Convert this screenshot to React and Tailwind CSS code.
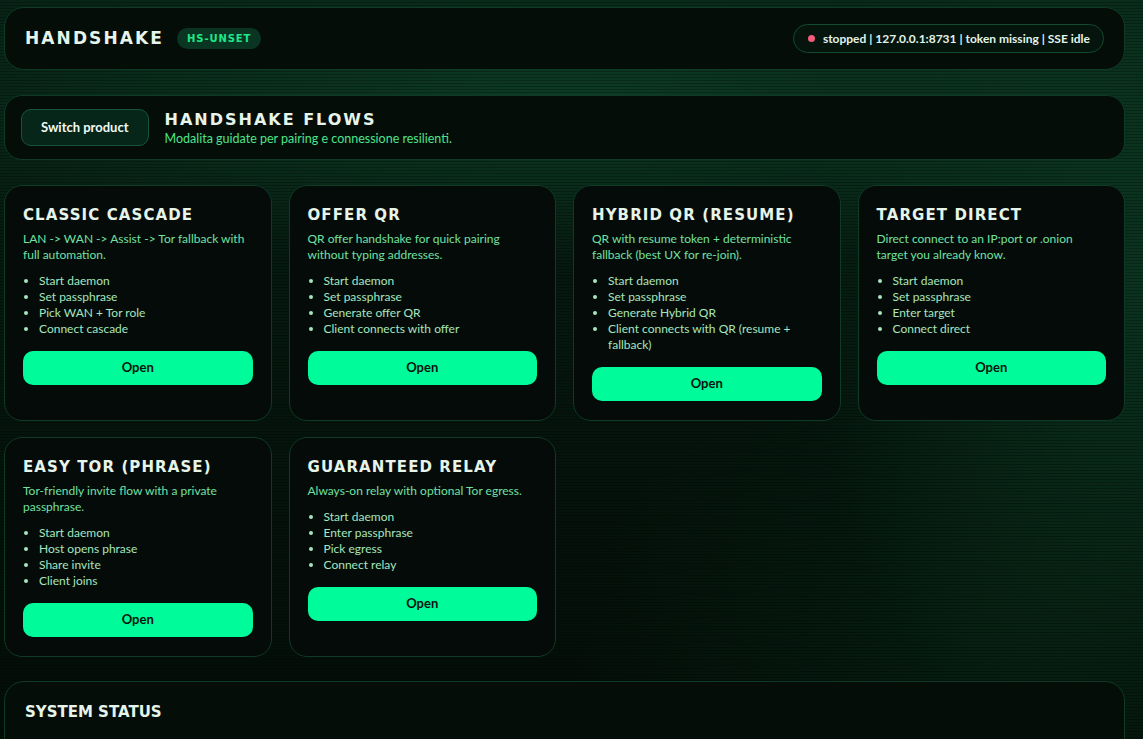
import React from "react";

const flows = [
  {
    title: "CLASSIC CASCADE",
    desc: "LAN -> WAN -> Assist -> Tor fallback with full automation.",
    steps: ["Start daemon", "Set passphrase", "Pick WAN + Tor role", "Connect cascade"],
  },
  {
    title: "OFFER QR",
    desc: "QR offer handshake for quick pairing without typing addresses.",
    steps: ["Start daemon", "Set passphrase", "Generate offer QR", "Client connects with offer"],
  },
  {
    title: "HYBRID QR (RESUME)",
    desc: "QR with resume token + deterministic fallback (best UX for re-join).",
    steps: ["Start daemon", "Set passphrase", "Generate Hybrid QR", "Client connects with QR (resume + fallback)"],
  },
  {
    title: "TARGET DIRECT",
    desc: "Direct connect to an IP:port or .onion target you already know.",
    steps: ["Start daemon", "Set passphrase", "Enter target", "Connect direct"],
  },
  {
    title: "EASY TOR (PHRASE)",
    desc: "Tor-friendly invite flow with a private passphrase.",
    steps: ["Start daemon", "Host opens phrase", "Share invite", "Client joins"],
  },
  {
    title: "GUARANTEED RELAY",
    desc: "Always-on relay with optional Tor egress.",
    steps: ["Start daemon", "Enter passphrase", "Pick egress", "Connect relay"],
  },
];

const heading = "font-['DejaVu_Sans',sans-serif] font-bold text-[#e6f4ea]";
const body = "font-['Lato','Liberation_Sans',sans-serif]";

function FlowCard({ f }) {
  return (
    <div className="rounded-[18px] border border-[#0f3a26] bg-[#050b08] px-[18px] pt-[17px] pb-[19px] flex flex-col">
      <h2 className={`${heading} text-[15px] leading-[24px] tracking-[1.1px]`}>{f.title}</h2>
      <p className={`${body} mt-[4px] text-[12px] leading-[16px] text-[#72e0a2] pr-2`}>{f.desc}</p>
      <ul className={`${body} mt-[10px] list-disc pl-[16px] text-[12px] leading-[16px] text-[#a6e6bf] marker:text-[#a6e6bf]`}>
        {f.steps.map((s) => (
          <li key={s}>{s}</li>
        ))}
      </ul>
      <button className={`${body} mt-[14px] h-[34px] w-full rounded-[10px] bg-[#00fb9a] text-[13px] font-bold text-[#07140d]`}>
        Open
      </button>
    </div>
  );
}

export default function App() {
  return (
    <div
      className="min-h-screen pl-[4px] pr-[18px] pt-[7px] pb-10 bg-[#04100a] bg-[repeating-linear-gradient(0deg,rgba(0,0,0,0.28)_0px,rgba(0,0,0,0.28)_1px,transparent_1px,transparent_3px),radial-gradient(ellipse_70%_18%_at_50%_11%,rgba(14,70,42,0.75),transparent_100%),radial-gradient(ellipse_30%_55%_at_100%_30%,rgba(14,70,42,0.6),transparent_100%),radial-gradient(ellipse_35%_30%_at_85%_70%,rgba(10,55,32,0.35),transparent_100%),linear-gradient(180deg,#072015_0%,#04110a_60%,#030a06_100%)]"
    >
      {/* Header */}
      <header className="flex h-[63px] items-center justify-between rounded-[20px] border border-[#0f3a26] bg-[#050d09] px-5">
        <div className="flex items-center gap-[13px]">
          <h1 className={`${heading} text-[17px] tracking-[2.1px]`}>HANDSHAKE</h1>
          <span className="flex h-[21px] items-center rounded-full bg-[#0a3523] px-[10px] font-['DejaVu_Sans',sans-serif] text-[10px] font-bold tracking-[0.9px] text-[#1ee887]">
            HS-UNSET
          </span>
        </div>
        <div className={`${body} flex h-[29px] items-center gap-[8px] rounded-full border border-[#124a30] bg-[#06140e] pl-[14px] pr-[13px] text-[12px] font-bold text-[#e2f3e8]`}>
          <span className="h-[7px] w-[7px] rounded-full bg-[#f25d7c]" />
          <span>stopped | 127.0.0.1:8731 | token missing | SSE idle</span>
        </div>
      </header>

      {/* Flows header */}
      <section className="mt-[25px] flex h-[65px] items-center gap-[16px] rounded-[18px] border border-[#0f3a26] bg-[#050d09] px-4">
        <button className={`${body} h-[37px] rounded-[10px] border border-[#17553a] bg-[#06261a] px-[19px] text-[13px] font-bold text-[#f1faf4]`}>
          Switch product
        </button>
        <div className="flex flex-col pt-[1px]">
          <h2 className={`${heading} text-[16px] leading-[22px] tracking-[2px]`}>HANDSHAKE FLOWS</h2>
          <p className={`${body} text-[12.5px] leading-[16px] text-[#4ee38a]`}>
            Modalita guidate per pairing e connessione resilienti.
          </p>
        </div>
      </section>

      {/* Grid */}
      <div className="mt-[25px] grid grid-cols-4 gap-x-[17px] gap-y-[16px]">
        {flows.map((f) => (
          <FlowCard key={f.title} f={f} />
        ))}
      </div>

      {/* System status */}
      <section className="mt-[24px] h-[200px] rounded-[20px] border border-[#0f3a26] bg-[#050d09] px-5 pt-[19px]">
        <h2 className={`${heading} text-[15px] leading-[22px] tracking-[0px]`}>SYSTEM STATUS</h2>
      </section>
    </div>
  );
}
